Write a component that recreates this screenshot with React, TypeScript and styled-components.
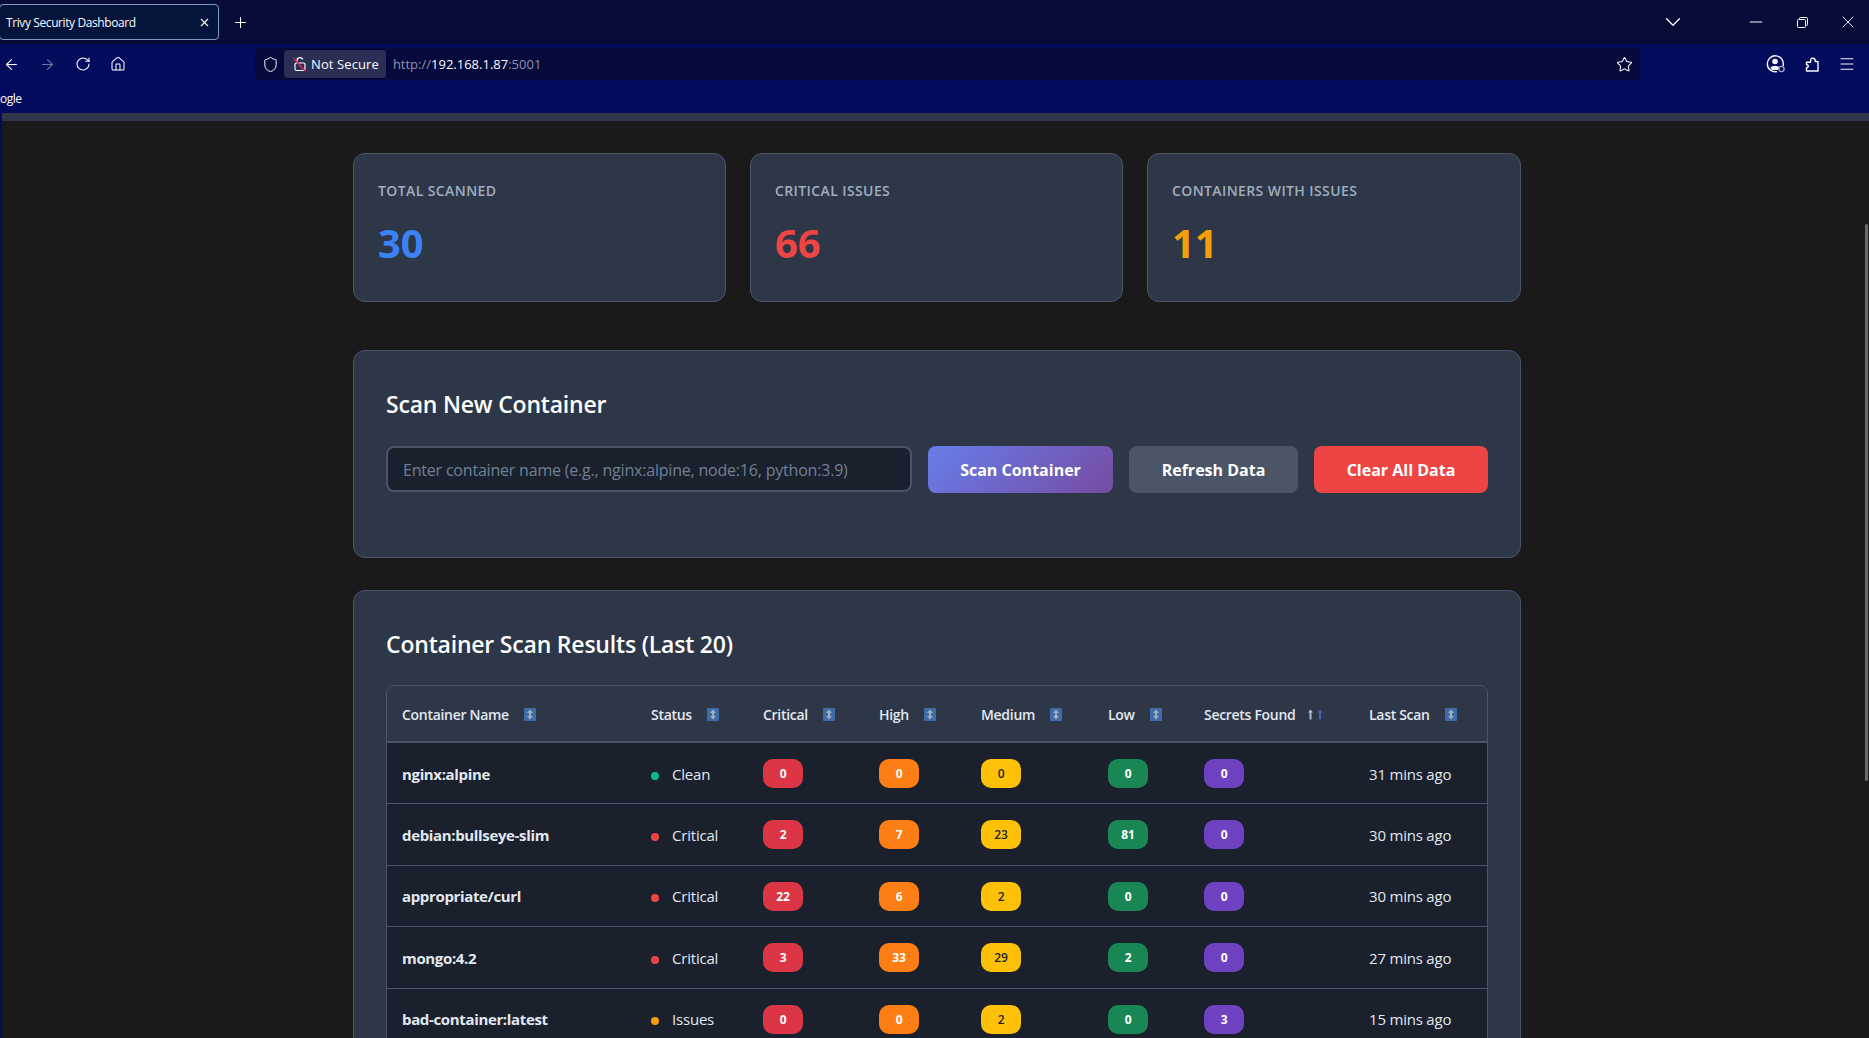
import { createGlobalStyle, styled } from 'styled-components';
import {
  ArrowLeft,
  ArrowRight,
  ChevronDown,
  House,
  Menu,
  Minus,
  Plus,
  RotateCw,
  Shield,
  Star,
  X,
} from 'lucide-react';

const GlobalStyle = createGlobalStyle`
  html, body {
    margin: 0;
    padding: 0;
    height: 1038px;
    overflow: hidden;
    background: #1a1a1a;
    font-family: 'Open Sans', 'Noto Sans', sans-serif;
  }
  * { box-sizing: border-box; }
`;

const rows = [
  { name: 'nginx:alpine', status: 'Clean', critical: 0, high: 0, medium: 0, low: 0, secrets: 0, last: '31 mins ago' },
  { name: 'debian:bullseye-slim', status: 'Critical', critical: 2, high: 7, medium: 23, low: 81, secrets: 0, last: '30 mins ago' },
  { name: 'appropriate/curl', status: 'Critical', critical: 22, high: 6, medium: 2, low: 0, secrets: 0, last: '30 mins ago' },
  { name: 'mongo:4.2', status: 'Critical', critical: 3, high: 33, medium: 29, low: 2, secrets: 0, last: '27 mins ago' },
  { name: 'bad-container:latest', status: 'Issues', critical: 0, high: 0, medium: 2, low: 0, secrets: 3, last: '15 mins ago' },
];

const columns = [
  { label: 'Container Name', width: 249 },
  { label: 'Status', width: 112 },
  { label: 'Critical', width: 116 },
  { label: 'High', width: 102 },
  { label: 'Medium', width: 127 },
  { label: 'Low', width: 96 },
  { label: 'Secrets Found', width: 165, sorted: true },
  { label: 'Last Scan', width: 135 },
];

const statusColors: Record<string, string> = {
  Clean: '#10b981',
  Critical: '#ef4444',
  Issues: '#f59e0b',
};

function SortIcon() {
  return (
    <svg width="12" height="13" viewBox="0 0 12 13">
      <rect width="12" height="13" rx="1" fill="#3f6ba8" />
      <path d="M6 1.5 9 5H7V8H9L6 11.5 3 8H5V5H3Z" fill="#a4adbb" />
    </svg>
  );
}

function SortedIcon() {
  return (
    <SortedSvg width="18" height="13" viewBox="0 0 18 13">
      <path d="M3.5 1.5 6 4.5H4.5V11.5H2.5V4.5H1Z" fill="#b4bcc8" />
      <path d="M13 1.5 15.5 4.5H14V11.5H12V4.5H10.5Z" fill="#4a5fb0" />
    </SortedSvg>
  );
}

function ProfileIcon() {
  return (
    <svg width="20" height="20" viewBox="0 0 20 20" fill="none">
      <path d="M17 12A8 8 0 1 0 11 17.6" stroke="#fbfbfe" strokeWidth="1.4" />
      <circle cx="9" cy="7.5" r="2.8" fill="#fbfbfe" />
      <path d="M4.5 13.5C5.5 11.5 12.5 11.5 13.5 13.5L12 16H6Z" fill="#fbfbfe" />
      <circle cx="15.5" cy="15" r="2.6" stroke="#9aa3c7" strokeWidth="1.4" />
    </svg>
  );
}

function OpenLockIcon() {
  return (
    <svg width="16" height="16" viewBox="0 0 16 16" fill="none">
      <path d="M5 7V4.5a3 3 0 0 1 5.8-1" stroke="#fbfbfe" strokeWidth="1.2" />
      <rect x="3" y="7" width="10" height="7.5" rx="1.5" stroke="#fbfbfe" strokeWidth="1.2" />
      <path d="M1.5 2 13 15" stroke="#e22850" strokeWidth="1.3" />
    </svg>
  );
}

function PuzzleIcon() {
  return (
    <svg width="16" height="16" viewBox="0 0 16 16" fill="none">
      <path
        d="M2.5 15H14V5.5H11.2C11.8 2.2 7.6 .8 6.8 3.6L6.6 6.2H2.5V8.8C4.8 8.4 4.8 12 2.5 11.7Z"
        stroke="#fbfbfe"
        strokeWidth="1.4"
        strokeLinejoin="round"
      />
    </svg>
  );
}

function RestoreIcon() {
  return (
    <svg width="11" height="11" viewBox="0 0 11 11" fill="none">
      <rect x="0.5" y="2.5" width="8" height="8" rx="1" stroke="#fbfbfe" />
      <path d="M2.5 2.5V1.5a1 1 0 0 1 1-1h6a1 1 0 0 1 1 1v6a1 1 0 0 1-1 1h-1" stroke="#fbfbfe" />
    </svg>
  );
}

export default function App() {
  return (
    <Page>
      <GlobalStyle />
      <TabStrip>
        <Tab>
          <TabTitle>Trivy Security Dashboard</TabTitle>
          <X size={13} color="#fbfbfe" />
        </Tab>
        <NewTab>
          <Plus size={17} color="#fbfbfe" strokeWidth={1.5} />
        </NewTab>
        <WindowControls>
          <TabListButton>
            <ChevronDown size={26} color="#fbfbfe" strokeWidth={1.2} />
          </TabListButton>
          <WindowButton>
            <Minus size={20} color="#fbfbfe" strokeWidth={1.3} />
          </WindowButton>
          <WindowButton>
            <RestoreIcon />
          </WindowButton>
          <WindowButton>
            <X size={20} color="#fbfbfe" strokeWidth={1.1} />
          </WindowButton>
        </WindowControls>
      </TabStrip>
      <Toolbar>
        <NavButtons>
          <ArrowLeft size={17} color="#fbfbfe" strokeWidth={1.6} />
          <ArrowRight size={17} color="#6d73a6" strokeWidth={1.6} />
          <RotateCw size={16} color="#fbfbfe" strokeWidth={1.6} />
          <House size={16} color="#fbfbfe" strokeWidth={1.6} />
        </NavButtons>
        <UrlBar>
          <Shield size={17} color="#fbfbfe" strokeWidth={1.4} />
          <SecurityChip>
            <OpenLockIcon />
            Not Secure
          </SecurityChip>
          <Url>
            http://<UrlHost>192.168.1.87</UrlHost>:5001
          </Url>
          <Star size={17} color="#fbfbfe" strokeWidth={1.5} />
        </UrlBar>
        <ToolbarRight>
          <ProfileIcon />
          <PuzzleIcon />
          <Menu size={18} color="#fbfbfe" strokeWidth={1.3} />
        </ToolbarRight>
      </Toolbar>
      <BookmarksBar>
        <Bookmark>Google</Bookmark>
      </BookmarksBar>
      <Viewport>
        <HeaderEdge />
        <Scrollbar />
        <Content>
          <Stats>
            <StatCard>
              <StatLabel>Total Scanned</StatLabel>
              <StatValue $color="#3b82f6">30</StatValue>
            </StatCard>
            <StatCard>
              <StatLabel>Critical Issues</StatLabel>
              <StatValue $color="#ef4444">66</StatValue>
            </StatCard>
            <StatCard>
              <StatLabel>Containers with Issues</StatLabel>
              <StatValue $color="#f59e0b">11</StatValue>
            </StatCard>
          </Stats>
          <ScanPanel>
            <PanelTitle $gap={21}>Scan New Container</PanelTitle>
            <ScanForm>
              <ScanInput placeholder="Enter container name (e.g., nginx:alpine, node:16, python:3.9)" />
              <ActionButton $bg="linear-gradient(135deg, #667eea 0%, #764ba2 100%)" $width={185}>
                Scan Container
              </ActionButton>
              <ActionButton $bg="#4a5568" $width={169}>
                Refresh Data
              </ActionButton>
              <ActionButton $bg="#ef4444" $width={174}>
                Clear All Data
              </ActionButton>
            </ScanForm>
          </ScanPanel>
          <ResultsPanel>
            <PanelTitle $gap={20}>Container Scan Results (Last 20)</PanelTitle>
            <TableWrap>
              <Table>
                <colgroup>
                  {columns.map((c) => (
                    <col key={c.label} width={c.width} />
                  ))}
                </colgroup>
                <thead>
                  <tr>
                    {columns.map((c) => (
                      <Th key={c.label}>
                        <ThInner>
                          {c.label}
                          {c.sorted ? <SortedIcon /> : <SortIcon />}
                        </ThInner>
                      </Th>
                    ))}
                  </tr>
                </thead>
                <tbody>
                  {rows.map((r) => (
                    <tr key={r.name}>
                      <NameCell>{r.name}</NameCell>
                      <Td>
                        <StatusDot $color={statusColors[r.status]} />
                        {r.status}
                      </Td>
                      <Td><Badge $bg="#dc3545">{r.critical}</Badge></Td>
                      <Td><Badge $bg="#fd7e14">{r.high}</Badge></Td>
                      <Td><Badge $bg="#ffc107" $fg="#212529">{r.medium}</Badge></Td>
                      <Td><Badge $bg="#198754">{r.low}</Badge></Td>
                      <Td><Badge $bg="#6f42c1">{r.secrets}</Badge></Td>
                      <Td>{r.last}</Td>
                    </tr>
                  ))}
                </tbody>
              </Table>
            </TableWrap>
          </ResultsPanel>
        </Content>
      </Viewport>
    </Page>
  );
}

const Page = styled.div`
  width: 1869px;
  height: 1038px;
  overflow: hidden;
  display: flex;
  flex-direction: column;
  background: #1a1a1a;
`;

const TabStrip = styled.div`
  height: 44px;
  background: #070c38;
  display: flex;
  align-items: center;
  flex-shrink: 0;
`;

const Tab = styled.div`
  width: 220px;
  height: 36px;
  margin-left: -1px;
  padding: 0 7px 0 6px;
  display: flex;
  align-items: center;
  justify-content: space-between;
  background: #04143a;
  border: 1px solid #7f9ac4;
  border-radius: 4px;
`;

const TabTitle = styled.span`
  color: #fbfbfe;
  font-size: 12px;
  letter-spacing: -0.4px;
`;

const NewTab = styled.div`
  margin-left: 13px;
  display: flex;
`;

const WindowControls = styled.div`
  margin-left: auto;
  margin-right: -2px;
  display: flex;
  align-items: center;
`;

const TabListButton = styled.div`
  display: flex;
  margin-right: 47px;
`;

const WindowButton = styled.div`
  width: 46px;
  display: flex;
  justify-content: center;
`;

const Toolbar = styled.div`
  height: 42px;
  background: #020b5c;
  display: flex;
  align-items: center;
  flex-shrink: 0;
  padding-bottom: 2px;
`;

const NavButtons = styled.div`
  width: 255px;
  padding-left: 3px;
  display: flex;
  align-items: center;
  gap: 19px;
`;

const UrlBar = styled.div`
  width: 1385px;
  height: 32px;
  background: #05093c;
  border-radius: 4px;
  display: flex;
  align-items: center;
  padding-left: 7px;
  padding-right: 7px;
`;

const SecurityChip = styled.div`
  height: 28px;
  margin-left: 5px;
  padding: 0 7px 0 8px;
  background: #2b2f55;
  border-radius: 4px;
  display: flex;
  align-items: center;
  gap: 3px;
  color: #fbfbfe;
  font-size: 13px;
  letter-spacing: 0.1px;
`;

const Url = styled.div`
  flex: 1;
  margin-left: 7px;
  color: #8f92ab;
  font-size: 13px;
`;

const UrlHost = styled.span`
  color: #fbfbfe;
`;

const ToolbarRight = styled.div`
  margin-left: auto;
  padding-right: 13px;
  display: flex;
  align-items: center;
  gap: 18px;
`;

const BookmarksBar = styled.div`
  height: 27px;
  background: #020b5c;
  position: relative;
  overflow: hidden;
  flex-shrink: 0;
`;

const Bookmark = styled.span`
  position: absolute;
  left: -15px;
  top: 4px;
  color: #fbfbfe;
  font-size: 12px;
  letter-spacing: -0.5px;
`;

const Viewport = styled.div`
  flex: 1;
  position: relative;
  border-left: 2px solid #020b5c;
`;

const HeaderEdge = styled.div`
  height: 8px;
  background: #2d3748;
`;

const Scrollbar = styled.div`
  position: absolute;
  right: 1px;
  top: 111px;
  width: 3px;
  height: 557px;
  background: #6b6b6b;
  border-radius: 2px;
`;

const Content = styled.div`
  width: 1168px;
  margin-left: 351px;
  padding-top: 32px;
  display: flex;
  flex-direction: column;
`;

const Stats = styled.div`
  display: grid;
  grid-template-columns: 373px 373px 374px;
  gap: 24px;
`;

const StatCard = styled.div`
  height: 149px;
  padding: 27px 24px 0;
  background: #2d3748;
  border: 1px solid #4a5568;
  border-radius: 12px;
`;

const StatLabel = styled.div`
  color: #a0aec0;
  font-size: 14px;
  font-weight: 600;
  line-height: 20px;
  letter-spacing: 0.4px;
  text-transform: uppercase;
  margin-bottom: 15px;
`;

const StatValue = styled.div<{ $color: string }>`
  color: ${(p) => p.$color};
  font-size: 40px;
  font-weight: 700;
  line-height: 54px;
`;

const ScanPanel = styled.section`
  margin-top: 48px;
  height: 208px;
  padding: 32px;
  background: #2d3748;
  border: 1px solid #4a5568;
  border-radius: 12px;
`;

const ResultsPanel = styled.section`
  margin-top: 32px;
  padding: 32px;
  background: #2d3748;
  border: 1px solid #4a5568;
  border-radius: 12px;
`;

const PanelTitle = styled.h2<{ $gap: number }>`
  margin: 0 0 ${(p) => p.$gap}px;
  color: #ffffff;
  font-size: 23px;
  font-weight: 600;
  line-height: 42px;
  letter-spacing: -0.2px;
`;

const ScanForm = styled.div`
  display: flex;
  gap: 16px;
`;

const ScanInput = styled.input`
  flex: 1;
  height: 46px;
  padding: 2px 15px 0;
  background: #1a202c;
  border: 2px solid #4a5568;
  border-radius: 8px;
  color: #fff;
  font-family: inherit;
  font-size: 16px;
  letter-spacing: -0.2px;
  &::placeholder {
    color: #718096;
  }
`;

const ActionButton = styled.button<{ $bg: string; $width: number }>`
  width: ${(p) => p.$width}px;
  height: 47px;
  flex-shrink: 0;
  padding: 0;
  border: none;
  border-radius: 8px;
  background: ${(p) => p.$bg};
  color: #fff;
  font-family: inherit;
  font-size: 16px;
  font-weight: 700;
`;

const TableWrap = styled.div`
  border: 1px solid #4a5568;
  border-radius: 8px;
  overflow: hidden;
`;

const Table = styled.table`
  width: 100%;
  table-layout: fixed;
  border-collapse: collapse;
`;

const Th = styled.th`
  height: 56px;
  padding: 2px 0 0 15px;
  background: #2d3748;
  border-bottom: 2px solid #4a5568;
  color: #e2e8f0;
  font-size: 14px;
  font-weight: 600;
  letter-spacing: -0.3px;
  text-align: left;
`;

const ThInner = styled.div`
  display: flex;
  align-items: center;
  gap: 15px;
`;

const SortedSvg = styled.svg`
  margin-left: -3px;
`;

const Td = styled.td`
  height: 61.5px;
  padding: 1px 0 0 15px;
  background: #1a202c;
  border-bottom: 1px solid #4a5568;
  color: #e2e8f0;
  font-size: 15px;
  letter-spacing: -0.2px;
`;

const NameCell = styled(Td)`
  font-weight: 700;
  letter-spacing: -0.35px;
`;

const StatusDot = styled.span<{ $color: string }>`
  display: inline-block;
  width: 8px;
  height: 8px;
  margin-right: 13px;
  border-radius: 50%;
  background: ${(p) => p.$color};
`;

const Badge = styled.span<{ $bg: string; $fg?: string }>`
  display: inline-flex;
  align-items: center;
  justify-content: center;
  width: 40px;
  height: 29px;
  border-radius: 10px;
  background: ${(p) => p.$bg};
  color: ${(p) => p.$fg ?? '#fff'};
  font-size: 12px;
  font-weight: ${(p) => (p.$fg ? 600 : 700)};
`;
